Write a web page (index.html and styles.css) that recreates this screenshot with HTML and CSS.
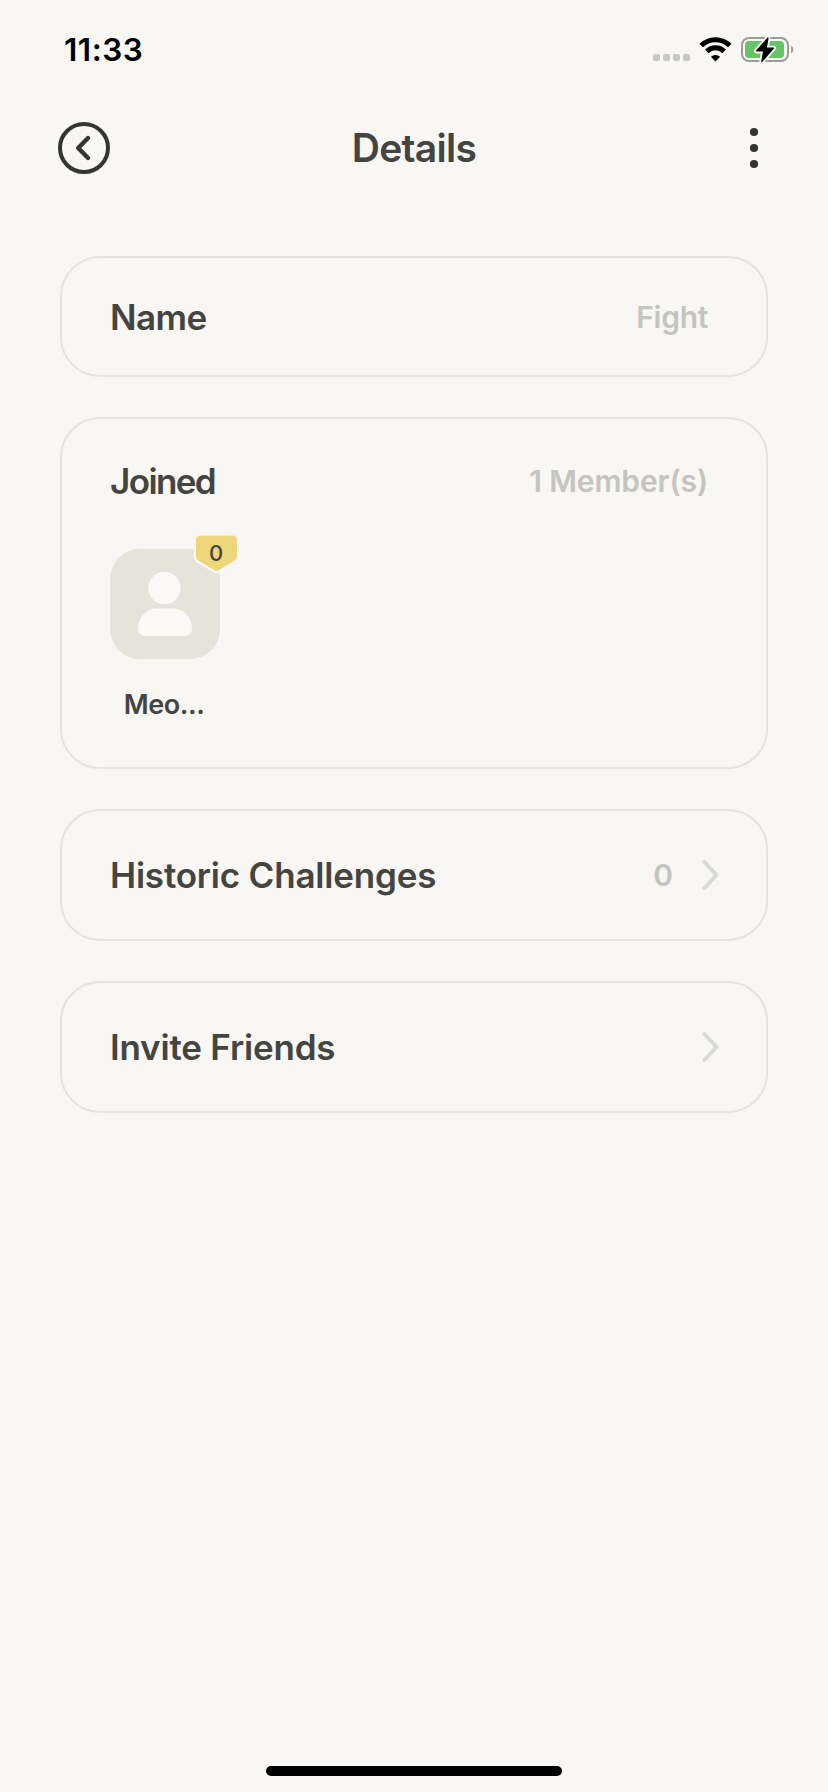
FILE: index.html
```html
<!DOCTYPE html>
<html lang="en">
<head>
<meta charset="utf-8">
<title>Details</title>
<link rel="stylesheet" href="styles.css">
</head>
<body>
<div class="screen">
  <div class="status-bar">
    <span class="time">11:33</span>
    <svg class="status-icons" width="144" height="32" viewBox="0 0 144 32">
      <g fill="#c7c7c3">
        <rect x="3" y="20" width="7" height="7" rx="2"/>
        <rect x="13" y="20" width="7" height="7" rx="2"/>
        <rect x="23" y="20" width="7" height="7" rx="2"/>
        <rect x="33" y="20" width="7" height="7" rx="2"/>
      </g>
      <g fill="none" stroke="#000" stroke-width="5">
        <path d="M51.200 11.500a20.400 20.400 0 0 1 28.600 0"/>
        <path d="M56.800 17.400a12.400 12.400 0 0 1 17.400 0"/>
      </g>
      <path d="M65.500 27.400l-4.600-4.600a6.500 6.500 0 0 1 9.200 0z"/>
      <rect x="92" y="4" width="46" height="23" rx="7" fill="none" stroke="#9c9c99" stroke-width="2"/>
      <path d="M141 11.500v8a4.600 4.600 0 0 0 0-8z" fill="#9c9c99"/>
      <rect x="95" y="7" width="39" height="17" rx="4" fill="#65c466"/>
      <path d="M118 4L106.500 17h7.200L111.800 27.600 123.500 14.200h-7.300z" fill="#f8f7f3" stroke="#f8f7f3" stroke-width="5" stroke-linejoin="round"/>
      <path d="M118 4L106.500 17h7.200L111.800 27.600 123.500 14.200h-7.300z" fill="#000" stroke="#000" stroke-width="1.200" stroke-linejoin="round"/>
    </svg>
  </div>
  <header class="header">
    <svg class="back" width="52" height="52" viewBox="0 0 52 52" fill="none" stroke="#353533" stroke-width="4">
      <circle cx="26" cy="26" r="24"/>
      <path d="M30 16L20.200 26l9.800 10" stroke-width="4.400" stroke-linecap="round" stroke-linejoin="round"/>
    </svg>
    <h1 class="title">Details</h1>
    <svg class="more" width="52" height="52" viewBox="0 0 52 52" fill="#353533">
      <circle cx="36" cy="10" r="4.100"/>
      <circle cx="36" cy="26" r="4.100"/>
      <circle cx="36" cy="42" r="4.100"/>
    </svg>
  </header>
  <main class="cards">
    <section class="card card-name">
      <span class="label label-name">Name</span>
      <span class="value value-name">Fight</span>
    </section>
    <section class="card card-joined">
      <div class="joined-head">
        <span class="label label-joined">Joined</span>
        <span class="value value-members">1 Member(s)</span>
      </div>
      <div class="member">
        <div class="avatar">
          <svg width="110" height="110" viewBox="0 0 110 110" fill="#faf9f7">
            <circle cx="54.500" cy="39" r="16.200"/>
            <path d="M46.500 59.500h17C74 59.500 82 69 82 80q0 7-8.500 7h-37Q28 87 28 80C28 69 36 59.500 46.500 59.500z"/>
          </svg>
          <div class="badge">
            <svg class="badge-shape" width="50" height="44" viewBox="0 0 50 44">
              <path d="M10 4.500h31q5 0 5 5v15.500q0 3-2.500 4.500L27 39.400q-1.500.9-3 0L7.500 29.500Q5 28 5 25V9.500q0-5 5-5z" fill="#eed77b" stroke="#f8f7f3" stroke-width="5" paint-order="stroke"/>
            </svg>
            <span class="badge-count">0</span>
          </div>
        </div>
        <span class="member-name">Meo...</span>
      </div>
    </section>
    <section class="card card-link">
      <span class="label label-historic">Historic Challenges</span>
      <span class="value value-count">0</span>
      <svg class="chevron" width="18" height="32" viewBox="0 0 18 32"><path d="M3.500 3l12 13-12 13"/></svg>
    </section>
    <section class="card card-link">
      <span class="label label-invite">Invite Friends</span>
      <svg class="chevron" width="18" height="32" viewBox="0 0 18 32"><path d="M3.500 3l12 13-12 13"/></svg>
    </section>
  </main>
  <div class="home-indicator"></div>
</div>
</body>
</html>
```

FILE: styles.css
```css
* { box-sizing: border-box; }

body {
  margin: 0;
  background: #f8f7f3;
  color: #444441;
  font-family: Inter, "Liberation Sans", sans-serif;
  font-weight: 600;
}

svg { display: block; flex: none; }

.screen {
  display: flex;
  flex-direction: column;
  width: 828px;
  height: 1792px;
  padding-bottom: 16px;
}

.status-bar {
  display: flex;
  justify-content: space-between;
  align-items: center;
  height: 100px;
  padding: 0 34px 0 64px;
  color: #000;
}

.time { font-size: 31.500px; letter-spacing: 0.500px; padding-bottom: 1px; }

.header {
  display: flex;
  justify-content: space-between;
  align-items: center;
  height: 96px;
  padding: 0 58px;
}

.title {
  margin: 0;
  padding-bottom: 2px;
  font-size: 39px;
  font-weight: 600;
  letter-spacing: -0.700px;
}

.cards {
  display: flex;
  flex-direction: column;
  gap: 40px;
  margin: 60px 60px 0;
}

.card {
  display: flex;
  align-items: center;
  border: 2px solid #e4e3df;
  border-radius: 40px;
  padding: 0 48px;
}

.card-name { height: 121px; justify-content: space-between; padding-right: 58px; }

.card-joined {
  height: 352px;
  flex-direction: column;
  align-items: stretch;
  padding-top: 40px;
}

.card-link { height: 132px; padding-right: 47px; }
.card-link .label { flex: 1; }

.label { font-size: 35px; letter-spacing: -0.200px; white-space: nowrap; }
.label-name { letter-spacing: -0.600px; }
.label-joined { letter-spacing: -1.600px; }

.value { font-size: 30px; color: #c4c4c0; white-space: nowrap; }
.value-name { letter-spacing: -0.300px; }
.value-members { letter-spacing: -0.100px; }
.value-count { margin-right: 28px; }

.joined-head {
  display: flex;
  justify-content: space-between;
  align-items: center;
  height: 44px;
  padding-right: 10px;
}

.member {
  display: flex;
  flex-direction: column;
  align-items: center;
  width: 110px;
  margin-top: 46px;
}

.avatar {
  position: relative;
  border-radius: 30px;
  background: #e5e3da;
}

.badge {
  position: absolute;
  left: 81px;
  top: -18px;
  width: 50px;
  height: 44px;
}

.badge-count {
  position: absolute;
  left: 0;
  top: 8px;
  width: 50px;
  line-height: 28px;
  font-size: 22px;
  font-weight: 500;
  text-align: center;
}

.member-name {
  margin-top: 29px;
  padding-right: 2px;
  font-size: 27px;
  line-height: 34px;
  letter-spacing: -0.400px;
}

.chevron path {
  fill: none;
  stroke: #d9d9d5;
  stroke-width: 4px;
  stroke-linecap: round;
  stroke-linejoin: round;
}

.home-indicator {
  width: 296px;
  height: 10px;
  margin: auto auto 0;
  border-radius: 5px;
  background: #000;
}
```
